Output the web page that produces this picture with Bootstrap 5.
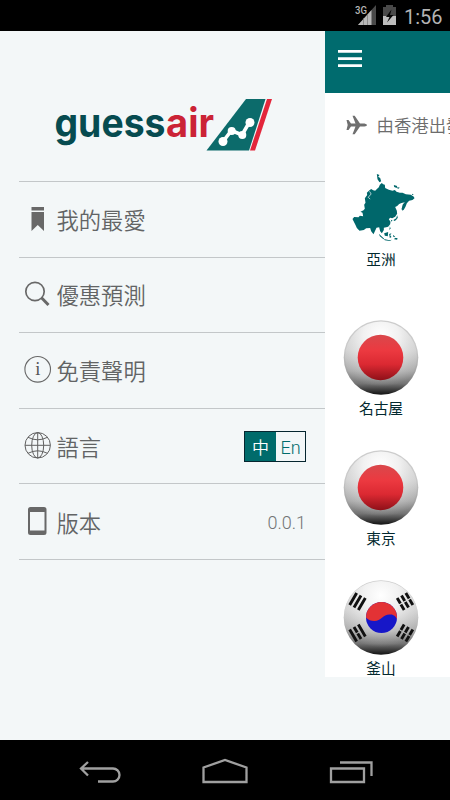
<!DOCTYPE html>
<html lang="zh-Hant">
<head>
<meta charset="utf-8">
<meta name="viewport" content="width=device-width, initial-scale=1">
<title>guessair</title>
<link href="https://cdn.jsdelivr.net/npm/bootstrap@5.3.0/dist/css/bootstrap.min.css" rel="stylesheet">
<style>
html, body { height: 100%; }
body { background: #f3f7f8; font-family: "Noto Sans CJK TC", "Noto Sans", sans-serif; overflow: hidden; }
svg { display: block; flex: none; }
.status-bar { height: 31px; background: #000; }
.nav-keys { height: 60px; background: #000; }
.drawer { width: 325px; padding-left: 19px; }
.brand { height: 150px; }
.menu-row { height: 75.6px; border-top: 1px solid #c3c7c9; color: #626465; font-size: 22.3px; font-weight: 350; line-height: 30px; padding: 0 19px 0 0; }
.menu-row:last-child { height: 76.6px; border-bottom: 1px solid #c3c7c9; }
.menu-search { padding-bottom: 2px; }
.menu-icon { width: 37.5px; }
.menu-icon svg { margin-left: 3px; }
.lang { width: 62px; height: 31px; border: 1px solid #06262f; font-size: 17px; line-height: 30px; text-align: center; margin-top: 1px; }
.lang-on { width: 31px; background: #006b6b; color: #fff; }
.lang-off { color: #006b6b; font-family: Roboto, sans-serif; font-size: 18px; line-height: 31px; }
.version { font-family: Roboto, sans-serif; font-weight: 300; font-size: 18px; color: #727475; margin-top: 3px; }
.page { width: 125px; height: 646px; background: #fff; }
.page-head { height: 62px; background: #006b6e; padding: 19px 0 0 13px; }
.from { height: 64px; padding: 0 0 0 21px; color: #6c6c6c; font-size: 17.4px; font-weight: 350; line-height: 26px; white-space: nowrap; }
.place { height: 130px; width: 112px; color: #03292f; font-size: 14.7px; line-height: 20px; }
.place-region { height: 163px; padding-top: 15px; }
</style>
<script src="https://cdn.jsdelivr.net/npm/bootstrap@5.3.0/dist/js/bootstrap.bundle.min.js"></script>
</head>
<body class="d-flex flex-column m-0">
<header class="status-bar flex-shrink-0 d-flex justify-content-end">
  <svg width="120" height="31">
    <text x="25" y="14.2" font-family="Roboto" font-size="10.5" font-weight="500" fill="#b5b5b5" textLength="12" lengthAdjust="spacingAndGlyphs">3G</text>
    <path d="M46 5V25H28Z" fill="#494949"/><path d="M41.5 10V25H28Z" fill="#b8b8b8"/>
    <path d="M33.5 18v7M37.5 14v11" stroke="#777" stroke-width=".7"/>
    <path d="M53 7h3V5h7v2h3v9H53Z" fill="#494949"/><path d="M53 16h13v9H53Z" fill="#bdbdbd"/>
    <path d="M61.5 9.5 56 17h3.5L57 22.5 63.5 15H60Z" fill="#050505"/>
    <text x="74" y="23.5" font-family="Roboto" font-weight="400" font-size="20.5" fill="#b4b4b4" textLength="38.5" lengthAdjust="spacingAndGlyphs">1:56</text>
  </svg>
</header>

<main class="d-flex flex-grow-1 overflow-hidden">
  <aside class="drawer flex-shrink-0">
    <div class="brand">
      <svg width="306" height="150" viewBox="19 31 306 150" font-family="Inter, sans-serif" font-weight="700" font-size="39.5">
        <text x="54.5" y="137" fill="#064b50" textLength="111" lengthAdjust="spacingAndGlyphs">guess</text>
        <text x="166" y="137" fill="#cb2336" textLength="48" lengthAdjust="spacingAndGlyphs">air</text>
        <path d="M246 99H265.5L249 150.5H206.5Z" fill="#0c6b6b"/>
        <path d="M267 99H272L255 150.5H250Z" fill="#e3263b"/>
        <path d="M223 141.5 231.5 130.5 242 135 249.5 122" fill="none" stroke="#fff" stroke-width="3.6"/>
        <g fill="#fff"><circle cx="223" cy="141.5" r="4.5"/><circle cx="231.7" cy="131" r="4"/><circle cx="242.3" cy="135" r="4"/><circle cx="250" cy="122.5" r="4.5"/></g>
      </svg>
    </div>
    <nav>
      <div class="menu-row d-flex align-items-center">
        <div class="menu-icon"><svg width="32" height="32" fill="#686868"><path d="M9.5 4h12.5v3.5H9.5ZM9.5 9h12.5v19l-6.25-6-6.25 6Z"/></svg></div><span>我的最愛</span>
      </div>
      <div class="menu-row menu-search d-flex align-items-center">
        <div class="menu-icon"><svg width="32" height="32" fill="none" stroke="#686868"><circle cx="13" cy="13.5" r="9.2" stroke-width="1.7"/><path d="M19.5 19.8 26.5 27" stroke-width="3"/></svg></div><span>優惠預測</span>
      </div>
      <div class="menu-row d-flex align-items-center">
        <div class="menu-icon"><svg width="32" height="32"><circle cx="15.7" cy="15.3" r="12.8" fill="none" stroke="#686868" stroke-width="1.1"/><text x="15.7" y="21.3" text-anchor="middle" font-family="Liberation Serif" font-size="18.5" fill="#555">i</text></svg></div><span>免責聲明</span>
      </div>
      <div class="menu-row d-flex align-items-center">
        <div class="menu-icon"><svg width="32" height="32" fill="none" stroke="#606060" stroke-width="1"><circle cx="15.7" cy="15.3" r="12.7"/><ellipse cx="15.7" cy="15.3" rx="6" ry="12.7"/><path d="M3 15.3H28.4M15.7 2.6V28M6 7.3Q15.7 12.3 25.4 7.3M6 23.3Q15.7 18.3 25.4 23.3"/></svg></div><span>語言</span>
        <div class="lang d-flex ms-auto"><div class="lang-on">中</div><div class="lang-off flex-fill">En</div></div>
      </div>
      <div class="menu-row d-flex align-items-center">
        <div class="menu-icon"><svg width="32" height="32"><path fill="#686868" fill-rule="evenodd" d="M8.5 1h13.500a2.500 2.500 0 0 1 2.500 2.500v23a2.500 2.500 0 0 1-2.500 2.500h-13.500A2.500 2.500 0 0 1 6 26.500v-23A2.500 2.500 0 0 1 8.500 1ZM8 6v18.500h14.500V6Z"/></svg></div><span>版本</span>
        <span class="version ms-auto">0.0.1</span>
      </div>
    </nav>
  </aside>

  <section class="page flex-shrink-0 overflow-hidden">
    <div class="page-head"><svg width="24" height="18" fill="#fff"><path d="M0 0h24v2.8H0ZM0 7.2h24V10H0ZM0 14.2h24V17H0Z"/></svg></div>
    <div class="from d-flex align-items-center">
      <svg class="me-2" width="22.5" height="20" fill="#6f6f6f"><path d="M.5 5H2.5L5 8.5H9.5L6.5 .7H8.7L14 8.5H18.5Q21 9 21 10 21 11 18.5 11.5H14L8.7 19.3H6.5L9.5 11.5H5L2.5 15H.5L1.7 10Z"/></svg><span>由香港出發</span>
    </div>
    <div class="place place-region d-flex flex-column align-items-center">
      <!-- Asia, drawn at three units per pixel -->
      <svg class="mb-1" width="75" height="73" viewBox="-1.5 6 225 219" fill="#00676b">
        <path d="M92 62 98 56 103 52 106 44 112 39 116 43 121 44 122 54 133 59 144 62 151 60 156 65 166 68 174 68 184 73 199 74 208 80 210 85 204 90 194 92 187 100 183 110 177 121 173 116 175 103 181 97 171 99 164 102 158 108 152 111 157 122 158 131 152 140 143 145 137 143 133 148 138 155 137 163 131 170 125 172 118 173 118 180 112 190 107 184 104 172 96 173 87 193 80 184 77 174 65 175 58 180 45 182 37 174 33 165 24 147 29 141 42 142 46 137 56 139 54 128 48 125 57 121 61 116 59 104 63 98 61 85 68 75 67 68 75 61 80 57 86 61Z"/>
        <path d="M97 12 105 15 101 20 107 24 110 34 105 37 99 28ZM148 45 158 48 157 54 149 51ZM158 51 166 53 160 57ZM203 71 208 74 202 75ZM176 102 179 106 174 123 171 117ZM158 136 160 143 154 151 149 153 147 150 155 145ZM139 149 144 151 141 155ZM133 167 139 175 134 180 136 172ZM103 191 119 206 117 208 106 199ZM119 190 131 186 130 199 121 197ZM118 207 135 211 142 209 136 213 121 211ZM134 192 141 190 137 196 141 201 136 204ZM146 194 153 202 146 200ZM151 204 159 204 158 209 149 208Z"/>
        <path d="M75 64 80 72 71 82 77 87" fill="none" stroke="#fff" stroke-width="2"/>
      </svg>
      <span>亞洲</span>
    </div>
    <div class="place d-flex flex-column align-items-center">
      <svg width="76" height="78" viewBox="0 0 76 78">
        <defs>
          <linearGradient id="shell" x2="0" y2="1"><stop offset="0" stop-color="#cdcdcd"/><stop offset=".4" stop-color="#c8c8c8"/><stop offset=".68" stop-color="#a6a6a6"/><stop offset=".85" stop-color="#747474"/><stop offset="1" stop-color="#111"/></linearGradient>
          <radialGradient id="shine" cx=".5" cy=".2" r=".72"><stop offset="0" stop-color="#fff"/><stop offset=".35" stop-color="#f5f5f5" stop-opacity=".9"/><stop offset="1" stop-color="#ddd" stop-opacity="0"/></radialGradient>
          <linearGradient id="sun" x2="0" y2="1"><stop offset="0" stop-color="#d9484c"/><stop offset=".35" stop-color="#ec3940"/><stop offset=".65" stop-color="#db2932"/><stop offset="1" stop-color="#8e1018"/></linearGradient>
        </defs>
        <circle cx="38" cy="37.5" r="37.3" fill="url(#shell)"/><ellipse cx="38" cy="37" rx="36" ry="35.5" fill="url(#shine)"/><circle cx="37.5" cy="37.5" r="22.8" fill="url(#sun)"/>
      </svg>
      <span>名古屋</span>
    </div>
    <div class="place d-flex flex-column align-items-center">
      <svg width="76" height="78" viewBox="0 0 76 78"><circle cx="38" cy="37.5" r="37.3" fill="url(#shell)"/><ellipse cx="38" cy="37" rx="36" ry="35.5" fill="url(#shine)"/><circle cx="37.5" cy="37.5" r="22.8" fill="url(#sun)"/></svg>
      <span>東京</span>
    </div>
    <div class="place d-flex flex-column align-items-center">
      <svg width="76" height="78" viewBox="0 0 76 78">
        <circle cx="38" cy="37.5" r="37.3" fill="url(#shell)"/><ellipse cx="38" cy="37" rx="37" ry="36" fill="url(#shine)"/>
        <circle cx="38.5" cy="37.5" r="15.5" fill="#1717c8"/>
        <path d="M23 37.5A15.5 15.5 0 0 1 54 37.5L53.9 39C52 35 49 34.500 46.500 34.500C40 34.500 38 41 31.500 41Q26 41 23 37.500Z" fill="#e33235"/>
        <g stroke="#111" stroke-width="2.9" fill="none">
          <g transform="translate(14.5 21.5) rotate(-60)"><path d="M-7-5H7M-7 0H7M-7 5H7"/></g>
          <g transform="translate(62 21.5) rotate(60)"><path stroke-dasharray="6.5 1" d="M-7-5H7M-7 0H7M-7 5H7"/></g>
          <g transform="translate(14.5 53) rotate(60)"><path d="M-7-5H7M-7 5H7"/><path stroke-dasharray="6.5 1" d="M-7 0H7"/></g>
          <g transform="translate(62 53) rotate(-60)"><path stroke-dasharray="6.5 1" d="M-7-5H7M-7 0H7M-7 5H7"/></g>
        </g>
      </svg>
      <span>釜山</span>
    </div>
  </section>
</main>

<footer class="nav-keys flex-shrink-0">
  <svg width="450" height="60" fill="none" stroke="#a0a0a0" stroke-width="2.3">
    <path d="M88 22 81 28.5 88 35.5M81 28.5H113a6.5 6.5 0 0 1 0 13H98M203.5 42V27.5L225 20 246.5 27.5V42ZM331 28.5H364V42H331ZM340 22.5H371.5V36"/>
  </svg>
</footer>
</body>
</html>
